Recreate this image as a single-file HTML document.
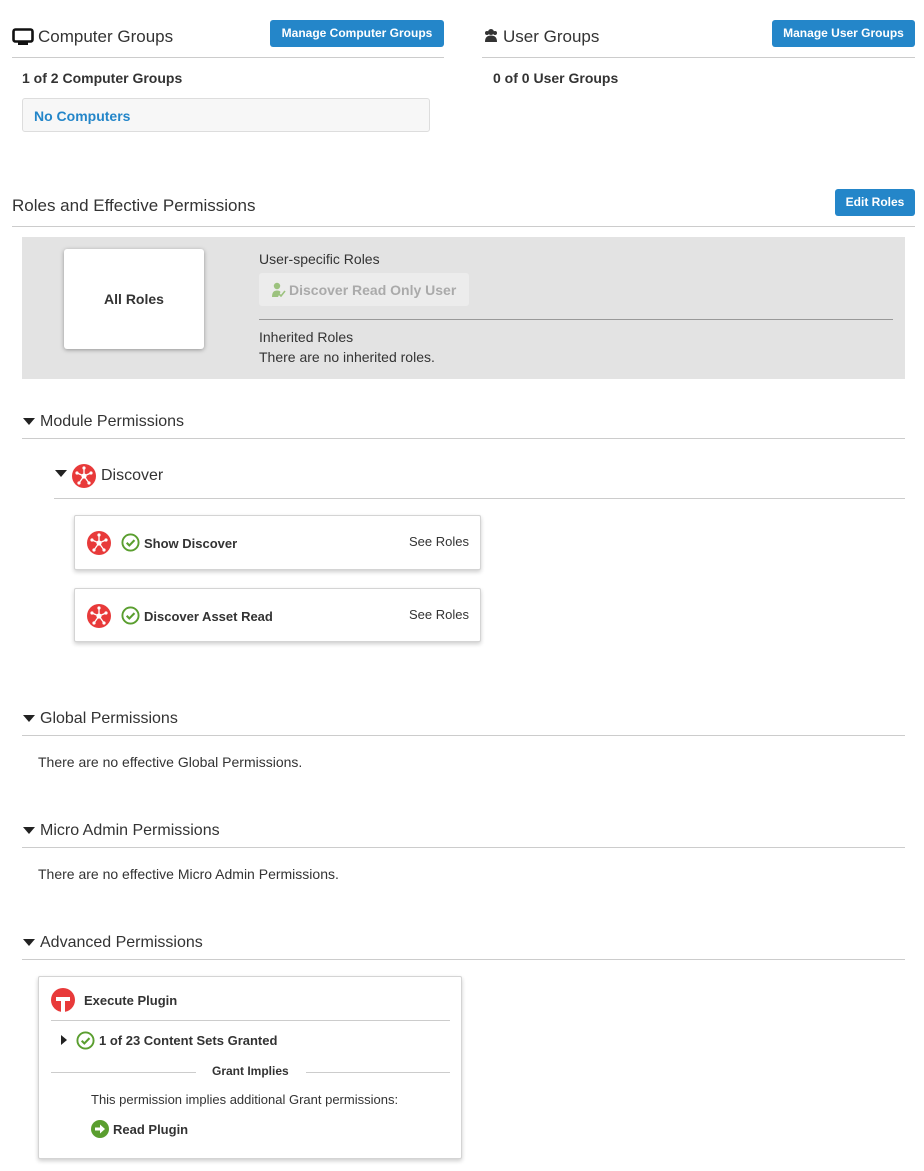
<!DOCTYPE html>
<html><head><meta charset="utf-8"><style>
body{margin:0;width:924px;height:1171px;background:#fff;font-family:"Liberation Sans",sans-serif;color:#333;position:relative;overflow:hidden}
.a{position:absolute}
.h{font-size:17px;color:#333}
.btn{position:absolute;background:#2486c9;color:#fff;font-weight:bold;font-size:12px;border-radius:3px;text-align:center;line-height:27px;height:27px}
.line{position:absolute;height:1px;background:#ccc}
.b{font-weight:bold}
.t{font-size:14px}
.card{position:absolute;background:#fff;border:1px solid #d4d4d4;border-radius:2px;box-shadow:0 2px 4px rgba(0,0,0,.2)}
.tri{position:absolute;width:0;height:0;border-left:6px solid transparent;border-right:6px solid transparent;border-top:7px solid #222}
</style></head><body>
<svg width="0" height="0" style="position:absolute"><defs>
<symbol id="disc" viewBox="0 0 24 24"><circle cx="12" cy="12" r="12" fill="#e83a3a"/><g stroke="#fff" stroke-width="1.3"><line x1="12" y1="12" x2="12" y2="4"/><line x1="12" y1="12" x2="19" y2="9"/><line x1="12" y1="12" x2="17" y2="19"/><line x1="12" y1="12" x2="7" y2="19"/><line x1="12" y1="12" x2="5" y2="9"/></g><g fill="#fff"><circle cx="12" cy="12" r="2.6"/><circle cx="12" cy="4" r="1.6"/><circle cx="19" cy="9" r="1.6"/><circle cx="17" cy="19" r="1.6"/><circle cx="7" cy="19" r="1.6"/><circle cx="5" cy="9" r="1.6"/></g></symbol>
<symbol id="chk" viewBox="0 0 20 20"><circle cx="10" cy="10" r="8.5" fill="none" stroke="#5a9e2f" stroke-width="2"/><path d="M6 10.3l2.8 2.8L14.2 7.5" fill="none" stroke="#5a9e2f" stroke-width="2.2"/></symbol>
</defs></svg>

<svg class="a" style="left:12px;top:28px" width="22" height="17" viewBox="0 0 22 17"><rect x="1.5" y="1.5" width="19" height="12" rx="2" fill="none" stroke="#111" stroke-width="2.6"/><rect x="6" y="14" width="10" height="3" fill="#111"/></svg>
<div class="a h" style="left:38px;top:27px">Computer Groups</div>
<div class="btn" style="left:270px;top:20px;width:174px">Manage Computer Groups</div>
<div class="line" style="left:12px;top:57px;width:432px"></div>
<div class="a b t" style="left:22px;top:70px">1 of 2 Computer Groups</div>
<div class="a" style="left:22px;top:98px;width:406px;height:32px;background:#f7f7f7;border:1px solid #ddd;border-radius:3px"></div>
<div class="a b t" style="left:34px;top:108px;color:#2486c9">No Computers</div>

<svg class="a" style="left:484px;top:28px" width="14" height="14" viewBox="0 0 14 14"><circle cx="7" cy="4" r="3" fill="#333"/><path d="M1 14c0-5 2.5-6.5 6-6.5s6 1.5 6 6.5z" fill="#333"/><circle cx="3" cy="5" r="2" fill="#333"/><circle cx="11" cy="5" r="2" fill="#333"/></svg>
<div class="a h" style="left:503px;top:27px">User Groups</div>
<div class="btn" style="left:772px;top:20px;width:143px">Manage User Groups</div>
<div class="line" style="left:482px;top:57px;width:433px"></div>
<div class="a b t" style="left:493px;top:70px">0 of 0 User Groups</div>

<div class="a h" style="left:12px;top:196px">Roles and Effective Permissions</div>
<div class="btn" style="left:835px;top:189px;width:80px">Edit Roles</div>
<div class="line" style="left:12px;top:226px;width:903px"></div>
<div class="a" style="left:22px;top:237px;width:883px;height:142px;background:#e3e3e3"></div>
<div class="a" style="left:64px;top:249px;width:140px;height:100px;background:#fff;border-radius:3px;box-shadow:0 1px 4px rgba(0,0,0,.35);text-align:center;line-height:100px;font-weight:bold;font-size:14px">All Roles</div>
<div class="a t" style="left:259px;top:251px">User-specific Roles</div>
<div class="a" style="left:259px;top:273px;width:210px;height:33px;background:#ececec;border-radius:3px"></div>
<svg class="a" style="left:272px;top:282px" width="14" height="15" viewBox="0 0 14 15"><circle cx="5" cy="4" r="3.2" fill="#9cc27e"/><path d="M0 15c0-5 2-6.5 5-6.5 2 0 3 .5 3.5 1.5L6 15z" fill="#9cc27e"/><path d="M7 12l2 2 4-5" fill="none" stroke="#9cc27e" stroke-width="1.6"/></svg>
<div class="a b t" style="left:289px;top:282px;color:#aaa">Discover Read Only User</div>
<div class="a" style="left:259px;top:319px;width:634px;height:1px;background:#999"></div>
<div class="a t" style="left:259px;top:329px">Inherited Roles</div>
<div class="a t" style="left:259px;top:349px">There are no inherited roles.</div>

<div class="tri" style="left:23px;top:418px"></div>
<div class="a h" style="left:40px;top:413px;font-size:16px">Module Permissions</div>
<div class="line" style="left:22px;top:438px;width:883px"></div>
<div class="tri" style="left:55px;top:470px"></div>
<svg class="a" style="left:72px;top:464px" width="24" height="24"><use href="#disc"/></svg>
<div class="a h" style="left:101px;top:467px;font-size:16px">Discover</div>
<div class="line" style="left:54px;top:498px;width:851px"></div>

<div class="card" style="left:74px;top:515px;width:405px;height:53px"></div>
<svg class="a" style="left:87px;top:531px" width="24" height="24"><use href="#disc"/></svg>
<svg class="a" style="left:121px;top:533px" width="19" height="19"><use href="#chk"/></svg>
<div class="a b" style="left:144px;top:536px;font-size:13px">Show Discover</div>
<div class="a" style="left:409px;top:534px;font-size:13px">See Roles</div>
<div class="card" style="left:74px;top:588px;width:405px;height:52px"></div>
<svg class="a" style="left:87px;top:604px" width="24" height="24"><use href="#disc"/></svg>
<svg class="a" style="left:121px;top:606px" width="19" height="19"><use href="#chk"/></svg>
<div class="a b" style="left:144px;top:609px;font-size:13px">Discover Asset Read</div>
<div class="a" style="left:409px;top:607px;font-size:13px">See Roles</div>

<div class="tri" style="left:23px;top:715px"></div>
<div class="a h" style="left:40px;top:710px;font-size:16px">Global Permissions</div>
<div class="line" style="left:22px;top:735px;width:883px"></div>
<div class="a t" style="left:38px;top:754px">There are no effective Global Permissions.</div>

<div class="tri" style="left:23px;top:827px"></div>
<div class="a h" style="left:40px;top:822px;font-size:16px">Micro Admin Permissions</div>
<div class="line" style="left:22px;top:847px;width:883px"></div>
<div class="a t" style="left:38px;top:866px">There are no effective Micro Admin Permissions.</div>

<div class="tri" style="left:23px;top:939px"></div>
<div class="a h" style="left:40px;top:934px;font-size:16px">Advanced Permissions</div>
<div class="line" style="left:22px;top:959px;width:883px"></div>

<div class="card" style="left:38px;top:976px;width:422px;height:181px"></div>
<svg class="a" style="left:51px;top:988px" width="24" height="24" viewBox="0 0 24 24"><circle cx="12" cy="12" r="12" fill="#e83a3a"/><path d="M5 9h14v4h-5v11h-4V13H5z" fill="#fff"/></svg>
<div class="a b" style="left:84px;top:993px;font-size:13px">Execute Plugin</div>
<div class="line" style="left:51px;top:1020px;width:399px"></div>
<div class="a" style="left:61px;top:1035px;width:0;height:0;border-top:5px solid transparent;border-bottom:5px solid transparent;border-left:6px solid #222"></div>
<svg class="a" style="left:76px;top:1031px" width="19" height="19"><use href="#chk"/></svg>
<div class="a b" style="left:99px;top:1033px;font-size:13px">1 of 23 Content Sets Granted</div>
<div class="line" style="left:51px;top:1072px;width:145px"></div>
<div class="line" style="left:306px;top:1072px;width:144px"></div>
<div class="a b" style="left:212px;top:1064px;font-size:12px">Grant Implies</div>
<div class="a" style="left:91px;top:1092px;font-size:13px">This permission implies additional Grant permissions:</div>
<svg class="a" style="left:91px;top:1120px" width="18" height="18" viewBox="0 0 18 18"><circle cx="9" cy="9" r="9" fill="#5a9e2f"/><path d="M4 7.5h5V4.5L14 9l-5 4.5v-3H4z" fill="#fff"/></svg>
<div class="a b" style="left:113px;top:1122px;font-size:13px">Read Plugin</div>
</body></html>
